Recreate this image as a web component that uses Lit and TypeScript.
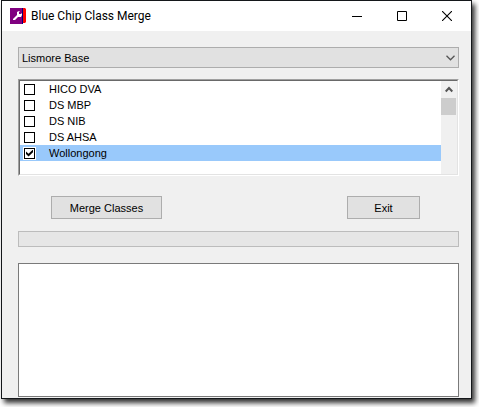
import { LitElement, html, css } from "lit";
import { customElement, state } from "lit/decorators.js";
import { classMap } from "lit/directives/class-map.js";

interface ClassItem {
  name: string;
  checked: boolean;
}

@customElement("app-root")
export class AppRoot extends LitElement {
  static styles = css`
    :host {
      display: flex;
      box-sizing: border-box;
      min-height: 100vh;
      padding: 0 7px 8px 1px;
      background: #fff;
      color: #000;
      font: 11px/16px "Liberation Sans", Arial, sans-serif;
    }
    * {
      box-sizing: border-box;
    }
    svg {
      display: block;
    }
    .window {
      flex: 1;
      min-width: 0;
      display: flex;
      flex-direction: column;
      border: 1px solid #14171a;
      background: #f0f0f0;
      box-shadow: 3px 4px 5px rgba(0, 0, 0, 0.8);
    }
    .titlebar {
      display: flex;
      align-items: center;
      height: 30px;
      padding: 0 2px 0 8px;
      background: #fff;
    }
    .title {
      flex: 1;
      margin: 0 0 0 5px;
      font: 12px/16px Roboto, "Noto Sans", sans-serif;
    }
    .controls {
      display: flex;
      gap: 1px;
    }
    .caption {
      display: flex;
      align-items: center;
      justify-content: center;
      width: 44px;
      height: 28px;
      padding: 0;
      border: 0;
      background: none;
    }
    .body {
      flex: 1;
      display: flex;
      flex-direction: column;
      padding: 16px 12px 1px 16px;
    }
    .combo {
      display: grid;
    }
    .combo select,
    .combo svg {
      grid-area: 1 / 1;
    }
    .combo svg {
      align-self: center;
      justify-self: end;
      margin-right: 4px;
      pointer-events: none;
    }
    select {
      appearance: none;
      width: 100%;
      height: 21px;
      padding: 0 20px 0 3px;
      border: 1px solid #adadad;
      border-radius: 0;
      background: #e1e1e1;
      color: #000;
      font: inherit;
    }
    .listbox {
      display: flex;
      height: 97px;
      margin-top: 11px;
      border: 1px solid;
      border-color: #a0a0a0 #fff #fff #a0a0a0;
      background: #fff;
    }
    .inner {
      flex: 1;
      display: flex;
      min-width: 0;
      border: 1px solid;
      border-color: #696969 #e3e3e3 #e3e3e3 #696969;
    }
    .items {
      flex: 1;
      margin: 0;
      padding: 0;
      list-style: none;
      overflow: hidden;
    }
    .item {
      display: flex;
      align-items: center;
      height: 16px;
      padding-left: 4px;
      gap: 14px;
    }
    .item.selected {
      background: #99c9fb;
    }
    .item input {
      appearance: none;
      display: grid;
      place-items: center;
      width: 11px;
      height: 11px;
      margin: 0;
      border: 1px solid #000;
      background: #fff;
      box-shadow: 0 0 0 1px #fff;
    }
    .item input:checked::before {
      content: "";
      width: 7px;
      height: 7px;
      background: #000;
      clip-path: polygon(0 28%, 36% 62%, 100% 0, 100% 38%, 36% 100%, 0 66%);
    }
    .scroll {
      width: 16px;
      padding-right: 1px;
      background: #f0f0f0;
    }
    .scroll svg {
      margin: 5px 0 5px 4px;
    }
    .thumb {
      height: 17px;
      background: #cdcdcd;
    }
    .actions {
      display: flex;
      justify-content: space-between;
      margin-top: 20px;
      padding: 0 39px 0 33px;
    }
    .push {
      height: 23px;
      padding: 0;
      border: 1px solid #adadad;
      background: #e1e1e1;
      color: #000;
      font: inherit;
    }
    .merge {
      width: 111px;
    }
    .exit {
      width: 73px;
    }
    .progress {
      height: 16px;
      margin-top: 12px;
      border: 1px solid #bcbcbc;
      background: #e6e6e6;
    }
    textarea {
      flex: 1;
      display: block;
      width: 100%;
      min-height: 60px;
      margin: 16px 0 0;
      border: 1px solid #7a7a7a;
      border-radius: 0;
      background: #fff;
      font: inherit;
      resize: none;
    }
  `;

  @state() private items: ClassItem[] = [
    { name: "HICO DVA", checked: false },
    { name: "DS MBP", checked: false },
    { name: "DS NIB", checked: false },
    { name: "DS AHSA", checked: false },
    { name: "Wollongong", checked: true },
  ];
  @state() private selected = 4;

  private toggle(index: number) {
    this.selected = index;
    this.items = this.items.map((item, i) =>
      i === index ? { ...item, checked: !item.checked } : item
    );
  }

  render() {
    return html`
      <main class="window">
        <header class="titlebar">
          <svg width="16" height="16" viewBox="0 0 16 16" aria-hidden="true">
            <path fill="#800080" d="M0 0h13v16H0z" />
            <path fill="#000080" d="M12 0h1v16h-1z" />
            <path fill="#f00" d="M13 0h2l1 1v13l-1 1h-2z" />
            <path fill="#fff" d="M3 11l4-4V4l2-1h1L9 4v2h2l1-1v2l-1 2H8l-3 3H3z" />
          </svg>
          <h1 class="title">Blue Chip Class Merge</h1>
          <div class="controls">
            <button class="caption" aria-label="Minimize">
              <svg width="10" height="10"><path d="M0 5h10v1H0z" /></svg>
            </button>
            <button class="caption" aria-label="Maximize">
              <svg width="10" height="10"><path d="M.5.5h9v9h-9z" fill="none" stroke="#000" /></svg>
            </button>
            <button class="caption" aria-label="Close">
              <svg width="10" height="10"><path d="M0 0l10 10M10 0L0 10" fill="none" stroke="#000" stroke-width="1.1" /></svg>
            </button>
          </div>
        </header>
        <div class="body">
          <div class="combo">
            <select aria-label="Base">
              <option>Lismore Base</option>
            </select>
            <svg width="9" height="6" aria-hidden="true">
              <path d="M.5 .8l4 4 4-4" fill="none" stroke="#555" stroke-width="1.3" />
            </svg>
          </div>
          <div class="listbox">
            <div class="inner">
              <ul class="items">
                ${this.items.map(
                  (item, i) => html`<li>
                    <label class=${classMap({ item: true, selected: i === this.selected })}>
                      <input type="checkbox" .checked=${item.checked} @change=${() => this.toggle(i)} />
                      ${item.name}
                    </label>
                  </li>`
                )}
              </ul>
              <div class="scroll" aria-hidden="true">
                <svg width="8" height="7">
                  <path d="M.7 5.5L4 2l3.3 3.5" fill="none" stroke="#555" stroke-width="2" />
                </svg>
                <div class="thumb"></div>
              </div>
            </div>
          </div>
          <div class="actions">
            <button class="push merge">Merge Classes</button>
            <button class="push exit">Exit</button>
          </div>
          <div class="progress" role="progressbar" aria-label="Merge progress" aria-valuenow="0"></div>
          <textarea aria-label="Log"></textarea>
        </div>
      </main>
    `;
  }
}
